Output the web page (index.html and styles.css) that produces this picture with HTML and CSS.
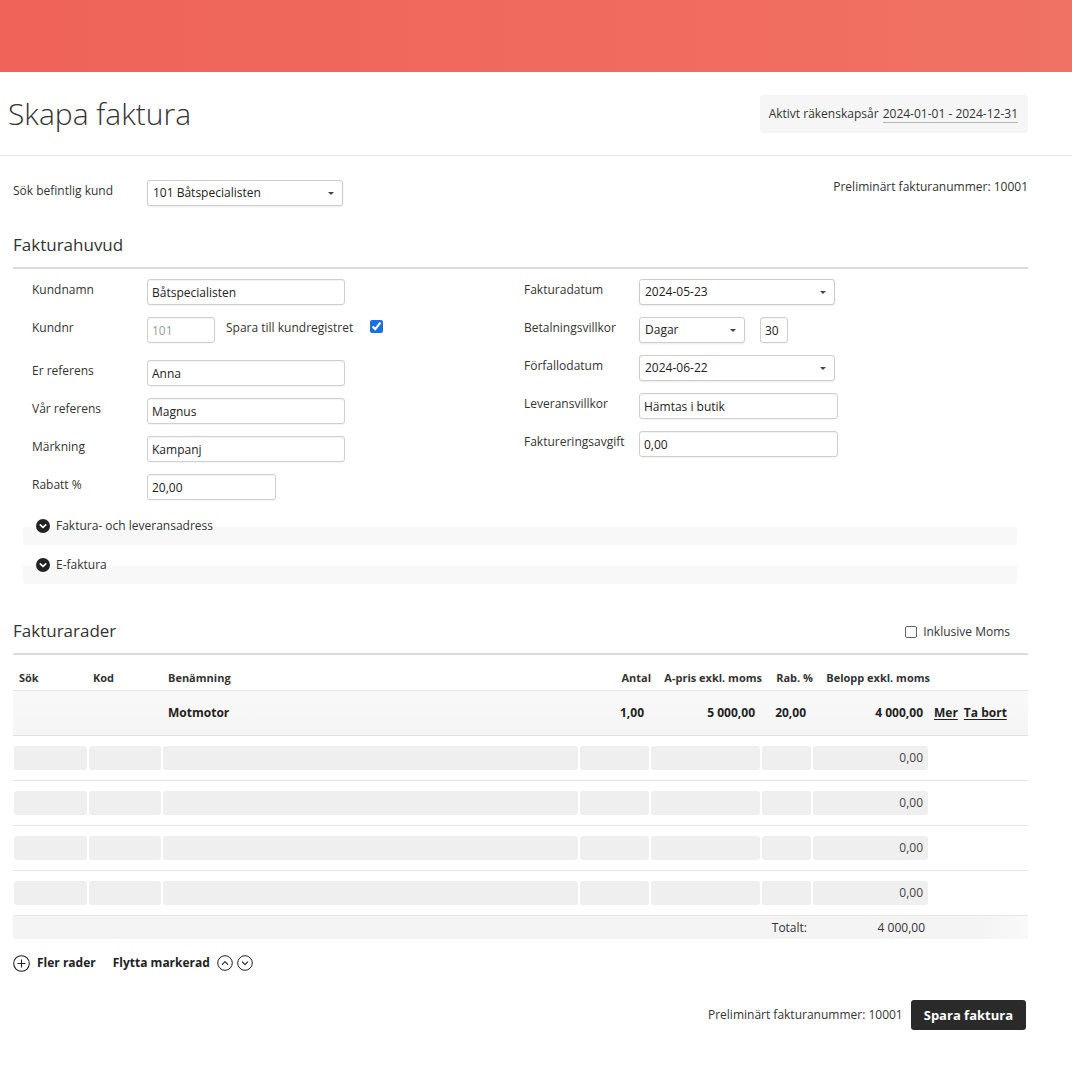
FILE: index.html
```html
<!DOCTYPE html>
<html lang="sv">
<head>
<meta charset="utf-8">
<title>Skapa faktura</title>
<link rel="stylesheet" href="styles.css">
</head>
<body>
<div class="topbar"></div>
<header class="page-head">
  <h1 class="page-title">Skapa faktura</h1>
  <div class="fiscal">Aktivt räkenskapsår <span class="fiscal-range">2024-01-01 - 2024-12-31</span></div>
</header>
<main class="content">
  <div class="search-row">
    <div class="search-left">
      <span class="lbl lbl-search">Sök befintlig kund</span>
      <div class="select w196">101 Båtspecialisten<span class="caret"></span></div>
    </div>
    <div class="prelim">Preliminärt fakturanummer: 10001</div>
  </div>

  <h2 class="section-title">Fakturahuvud</h2>
  <div class="form-grid">
    <div class="form-col">
      <div class="frow"><span class="lbl">Kundnamn</span><input class="inp w198" value="Båtspecialisten"></div>
      <div class="frow frow-tall"><span class="lbl">Kundnr</span><input class="inp w68 ro" value="101" readonly><span class="save-lbl">Spara till kundregistret</span><input type="checkbox" class="chk" checked></div>
      <div class="frow"><span class="lbl">Er referens</span><input class="inp w198" value="Anna"></div>
      <div class="frow"><span class="lbl">Vår referens</span><input class="inp w198" value="Magnus"></div>
      <div class="frow"><span class="lbl">Märkning</span><input class="inp w198" value="Kampanj"></div>
      <div class="frow"><span class="lbl">Rabatt %</span><input class="inp w129" value="20,00"></div>
    </div>
    <div class="form-col">
      <div class="frow"><span class="lbl">Fakturadatum</span><div class="select w196">2024-05-23<span class="caret"></span></div></div>
      <div class="frow"><span class="lbl">Betalningsvillkor</span><div class="select w106">Dagar<span class="caret"></span></div><input class="inp w28 days" value="30"></div>
      <div class="frow"><span class="lbl">Förfallodatum</span><div class="select w196">2024-06-22<span class="caret"></span></div></div>
      <div class="frow"><span class="lbl">Leveransvillkor</span><input class="inp w199" value="Hämtas i butik"></div>
      <div class="frow"><span class="lbl">Faktureringsavgift</span><input class="inp w199" value="0,00"></div>
    </div>
  </div>

  <div class="collapse">
    <svg class="chev-icon" width="14" height="14" viewBox="0 0 14 14"><circle cx="7" cy="7" r="7" fill="#222"/><path d="M4.3 5.8 L7 8.5 L9.7 5.8" fill="none" stroke="#fff" stroke-width="1.7" stroke-linecap="round" stroke-linejoin="round"/></svg>
    <span>Faktura- och leveransadress</span>
  </div>
  <div class="collapse collapse-next">
    <svg class="chev-icon" width="14" height="14" viewBox="0 0 14 14"><circle cx="7" cy="7" r="7" fill="#222"/><path d="M4.3 5.8 L7 8.5 L9.7 5.8" fill="none" stroke="#fff" stroke-width="1.7" stroke-linecap="round" stroke-linejoin="round"/></svg>
    <span>E-faktura</span>
  </div>

  <div class="rows-head">
    <h2 class="section-title-plain">Fakturarader</h2>
    <label class="incl"><span class="box"></span>Inklusive Moms</label>
  </div>

  <div class="tbl">
    <div class="trow thead">
      <div class="c pl3">Sök</div>
      <div class="c pl2">Kod</div>
      <div class="c pl3">Benämning</div>
      <div class="c r">Antal</div>
      <div class="c r">A-pris exkl. moms</div>
      <div class="c r">Rab. %</div>
      <div class="c r">Belopp exkl. moms</div>
      <div class="c"></div>
    </div>
    <div class="trow filled">
      <div class="c"></div>
      <div class="c"></div>
      <div class="c pl5">Motmotor</div>
      <div class="c r pr5">1,00</div>
      <div class="c r pr5">5 000,00</div>
      <div class="c r pr5">20,00</div>
      <div class="c r pr5">4 000,00</div>
      <div class="c links"><a href="#">Mer</a><a href="#">Ta bort</a></div>
    </div>
    <div class="trow empty">
      <div class="cell"></div><div class="cell"></div><div class="cell"></div><div class="cell"></div><div class="cell"></div><div class="cell"></div><div class="cell num">0,00</div><div></div>
    </div>
    <div class="trow empty">
      <div class="cell"></div><div class="cell"></div><div class="cell"></div><div class="cell"></div><div class="cell"></div><div class="cell"></div><div class="cell num">0,00</div><div></div>
    </div>
    <div class="trow empty">
      <div class="cell"></div><div class="cell"></div><div class="cell"></div><div class="cell"></div><div class="cell"></div><div class="cell"></div><div class="cell num">0,00</div><div></div>
    </div>
    <div class="trow empty">
      <div class="cell"></div><div class="cell"></div><div class="cell"></div><div class="cell"></div><div class="cell"></div><div class="cell"></div><div class="cell num">0,00</div><div></div>
    </div>
    <div class="trow total">
      <div></div><div></div><div></div><div></div><div></div>
      <div class="c r pr4 tot-lbl">Totalt:</div>
      <div class="c r pr3">4 000,00</div>
      <div></div>
    </div>
  </div>

  <div class="row-tools">
    <span class="tool">
      <svg width="17" height="17" viewBox="0 0 17 17"><circle cx="8.5" cy="8.5" r="7.8" fill="none" stroke="#222" stroke-width="1.1"/><path d="M8.5 4.6 V12.4 M4.6 8.5 H12.4" stroke="#222" stroke-width="1.1"/></svg>
      <b>Fler rader</b>
    </span>
    <span class="tool tool-move">
      <b>Flytta markerad</b>
      <span class="arrows">
        <svg width="16" height="16" viewBox="0 0 16 16"><circle cx="8" cy="8" r="7.3" fill="none" stroke="#222" stroke-width="1"/><path d="M5.3 9.3 L8 6.6 L10.7 9.3" fill="none" stroke="#222" stroke-width="1.1" stroke-linecap="round" stroke-linejoin="round"/></svg>
        <svg width="16" height="16" viewBox="0 0 16 16"><circle cx="8" cy="8" r="7.3" fill="none" stroke="#222" stroke-width="1"/><path d="M5.3 6.9 L8 9.6 L10.7 6.9" fill="none" stroke="#222" stroke-width="1.1" stroke-linecap="round" stroke-linejoin="round"/></svg>
      </span>
    </span>
  </div>

  <div class="save-row">
    <span class="prelim-bottom">Preliminärt fakturanummer: 10001</span>
    <button class="btn-save">Spara faktura</button>
  </div>
</main>
</body>
</html>
```

FILE: styles.css
```css
* { box-sizing: border-box; }

body {
  margin: 0;
  font-family: "Open Sans", "Liberation Sans", sans-serif;
  font-size: 12px;
  line-height: 18px;
  color: #333;
  background: #fff;
}

.topbar {
  height: 72px;
  background: linear-gradient(90deg, #ef6358 0%, #f06a5d 50%, #f07264 100%);
}

.page-head {
  display: flex;
  align-items: center;
  justify-content: space-between;
  height: 84px;
  padding: 0 44px 0 8px;
  border-bottom: 1px solid #e8e8e8;
}

.page-title {
  margin: 0;
  font-size: 30px;
  font-weight: 300;
  line-height: 36px;
  color: #333;
}

.fiscal {
  display: flex;
  align-items: center;
  height: 38px;
  padding: 0 10px 0 9px;
  background: #f6f6f6;
  border-radius: 4px;
  color: #333;
  white-space: pre;
}

.fiscal-range {
  margin-left: 1px;
  border-bottom: 1px solid #b5b5b5;
  line-height: 17px;
}

.content {
  padding: 0 44px 0 13px;
}

.search-row {
  display: flex;
  justify-content: space-between;
  align-items: flex-start;
  padding-top: 24px;
}

.search-left {
  display: flex;
  align-items: flex-start;
}

.lbl {
  flex: none;
  width: 115px;
  padding-top: 2px;
  color: #333;
}

.lbl-search {
  width: 134px;
}

.prelim {
  margin-top: -2px;
}

.select {
  display: flex;
  align-items: center;
  justify-content: space-between;
  height: 26px;
  padding: 0 8px 0 5px;
  border: 1px solid #ccc;
  border-radius: 3px;
  background: #fff;
  box-shadow: 0 1px 2px rgba(0, 0, 0, 0.08);
  color: #222;
}

.caret {
  width: 0;
  height: 0;
  border-left: 3px solid transparent;
  border-right: 3px solid transparent;
  border-top: 3px solid #444;
}

.inp {
  height: 26px;
  padding: 0 4px;
  border: 1px solid #cfcfcf;
  border-radius: 3px;
  font: inherit;
  color: #222;
  background: #fff;
  box-shadow: inset 0 1px 1px rgba(0, 0, 0, 0.05), 0 1px 1px rgba(0, 0, 0, 0.04);
  outline: none;
}

.inp.ro { color: #9a9a9a; }

.w196 { width: 196px; }
.w198 { width: 198px; }
.w199 { width: 199px; }
.w129 { width: 129px; }
.w106 { width: 106px; }
.w68 { width: 68px; }
.w28 { width: 28px; }

.days { margin-left: 15px; }

.section-title {
  margin: 27px 0 0;
  padding-bottom: 11px;
  font-size: 17px;
  font-weight: 400;
  line-height: 23px;
  color: #333;
  border-bottom: 2px solid #dcdcdc;
}

.form-grid {
  display: grid;
  grid-template-columns: 492px 1fr;
  padding: 10px 0 0 19px;
}

.frow {
  display: flex;
  align-items: flex-start;
  margin-bottom: 12px;
}

.frow:last-child { margin-bottom: 0; }

.frow-tall { margin-bottom: 17px; }

.save-lbl {
  margin-left: 11px;
  padding-top: 2px;
}

.chk {
  width: 13px;
  height: 13px;
  margin: 3px 0 0 17px;
  accent-color: #1b6fe6;
}

.collapse {
  display: flex;
  align-items: flex-start;
  gap: 6px;
  margin: 17px 11px 0 10px;
  padding: 0 0 10px 13px;
  background: linear-gradient(#fff 0, #fff 10px, #f8f8f8 10px);
  border-radius: 0 0 4px 4px;
  color: #333;
}

.chev-icon { margin-top: 2px; flex: none; }

.collapse-next { margin-top: 11px; }

.rows-head {
  display: flex;
  justify-content: space-between;
  align-items: center;
  margin-top: 35px;
  padding-bottom: 11px;
  border-bottom: 2px solid #dcdcdc;
}

.section-title-plain {
  margin: 0;
  font-size: 17px;
  font-weight: 400;
  line-height: 23px;
  color: #333;
}

.incl {
  display: flex;
  align-items: center;
  gap: 6px;
  margin-right: 18px;
  padding-top: 2px;
  color: #333;
}

.incl .box {
  width: 12px;
  height: 12px;
  border: 1px solid #666;
  border-radius: 2px;
  background: #fff;
}

.trow {
  display: grid;
  grid-template-columns: 73px 72px 415px 69px 109px 49px 115px 1fr;
  column-gap: 2px;
}

.c { white-space: nowrap; }
.r { text-align: right; }
.pl2 { padding-left: 2px; }
.pl3 { padding-left: 3px; }
.pl5 { padding-left: 5px; }
.pr3 { padding-right: 3px; }
.pr4 { padding-right: 4px; }
.pr5 { padding-right: 5px; }

.thead {
  padding: 15px 0 4px 3px;
  font-size: 11px;
  font-weight: 700;
  line-height: 16px;
  color: #333;
  border-bottom: 1px solid #e2e2e2;
}

.filled {
  height: 45px;
  align-items: center;
  padding-left: 1px;
  background: linear-gradient(#f9f9f9, #f5f5f5);
  border-bottom: 1px solid #e0e0e0;
  font-weight: 700;
  color: #222;
}

.links {
  display: flex;
  gap: 6px;
  padding-left: 4px;
}

.links a {
  color: #222;
  text-decoration: underline;
  text-underline-offset: 2px;
}

.empty {
  padding: 10px 0 10px 1px;
  border-bottom: 1px solid #e6e6e6;
}

.cell {
  height: 24px;
  background: #efefef;
  border-radius: 3px;
}

.cell.num {
  padding-right: 5px;
  text-align: right;
  line-height: 24px;
  color: #444;
}

.total {
  height: 23px;
  align-items: center;
  padding-left: 1px;
  background: linear-gradient(90deg, #f4f4f4 0%, #f4f4f4 95%, #f9f9f9 100%);
  color: #333;
}

.tot-lbl { overflow: visible; }

.row-tools {
  display: flex;
  align-items: center;
  gap: 17px;
  margin-top: 15px;
  color: #222;
}

.tool {
  display: flex;
  align-items: center;
  gap: 7px;
}

.tool b { font-weight: 700; }

.tool-move { gap: 7px; }

.arrows {
  display: flex;
  gap: 4px;
}

.save-row {
  display: flex;
  justify-content: flex-end;
  align-items: center;
  gap: 8px;
  margin-top: 28px;
  padding-right: 2px;
  padding-bottom: 30px;
}

.prelim-bottom { color: #333; }

.btn-save {
  height: 30px;
  padding: 0 13px;
  border: none;
  border-radius: 3px;
  background: #2a2a2a;
  color: #fff;
  font-family: inherit;
  font-size: 13px;
  font-weight: 700;
}
```
